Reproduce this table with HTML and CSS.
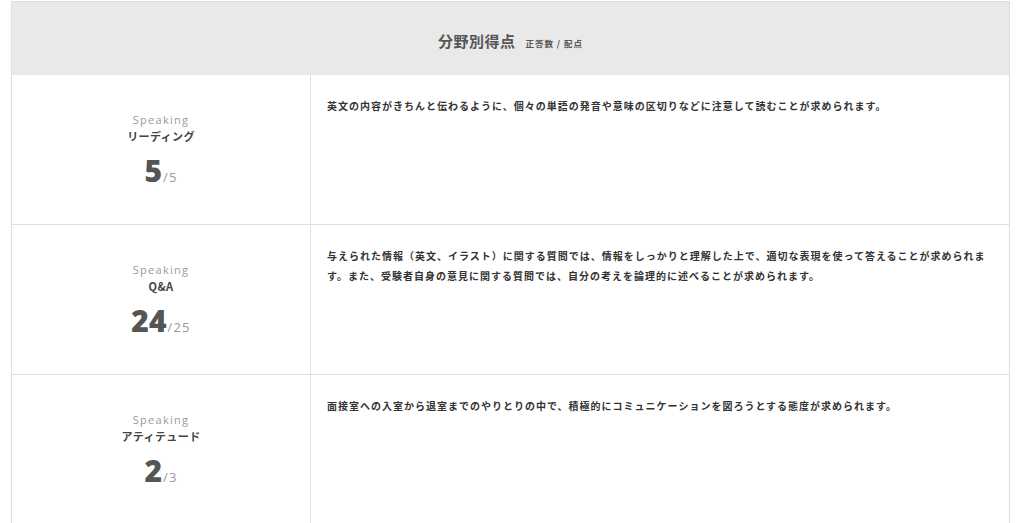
FILE: index.html
```html
<!DOCTYPE html>
<html lang="ja">
<head>
<meta charset="utf-8">
<title>分野別得点</title>
<link rel="stylesheet" href="styles.css">
</head>
<body>
<div class="score-table">
  <div class="head">
    <h2 class="title">分野別得点<span class="sub">正答数 / 配点</span></h2>
  </div>
  <div class="row">
    <div class="cat">
      <p class="en">Speaking</p>
      <p class="ja">リーディング</p>
      <p class="score"><b>5</b><span>/5</span></p>
    </div>
    <div class="desc"><p>英文の内容がきちんと伝わるように、個々の単語の発音や意味の区切りなどに注意して読むことが求められます。</p></div>
  </div>
  <div class="row">
    <div class="cat">
      <p class="en">Speaking</p>
      <p class="ja">Q&amp;A</p>
      <p class="score"><b>24</b><span>/25</span></p>
    </div>
    <div class="desc"><p>与えられた情報（英文、イラスト）に関する質問では、情報をしっかりと理解した上で、適切な表現を使って答えることが求められます。また、受験者自身の意見に関する質問では、自分の考えを論理的に述べることが求められます。</p></div>
  </div>
  <div class="row">
    <div class="cat">
      <p class="en">Speaking</p>
      <p class="ja">アティテュード</p>
      <p class="score"><b>2</b><span>/3</span></p>
    </div>
    <div class="desc"><p>面接室への入室から退室までのやりとりの中で、積極的にコミュニケーションを図ろうとする態度が求められます。</p></div>
  </div>
</div>
</body>
</html>
```

FILE: styles.css
```css
* { box-sizing: border-box; }
html, body { margin: 0; padding: 0; background: #fff; }
body {
  font-family: "Noto Sans CJK JP", "Noto Sans", sans-serif;
  color: #333;
}
p, h2 { margin: 0; }

.score-table {
  width: 999px;
  margin: 1px 0 0 11px;
  border: 1px solid #dedede;
  border-bottom: none;
}

.head {
  height: 73px;
  background: #e9e9e9;
  padding-top: 29px;
  text-align: center;
}
.title {
  font-size: 15px;
  line-height: 20px;
  font-weight: 700;
  color: #555;
  letter-spacing: 0.5px;
}
.sub {
  font-size: 8.5px;
  font-weight: 700;
  margin-left: 10px;
  letter-spacing: 1px;
  color: #555;
}

.row {
  display: grid;
  grid-template-columns: 299px 1fr;
  height: 150px;
  border-bottom: 1px solid #e0e0e0;
}

.cat {
  border-right: 1px solid #e0e0e0;
  padding-top: 37px;
  text-align: center;
}
.en {
  font-family: "Open Sans", "Noto Sans", sans-serif;
  font-size: 11px;
  line-height: 16px;
  letter-spacing: 1.3px;
  color: #9a9a9a;
}
.ja {
  font-size: 11px;
  line-height: 16px;
  font-weight: 700;
  letter-spacing: 0.4px;
  color: #444;
}
.score {
  margin-top: 9px;
  font-family: "Open Sans", "Noto Sans", sans-serif;
  line-height: 36px;
  color: #555;
}
.score b {
  font-size: 30px;
  font-weight: 800;
  letter-spacing: 0;
}
.score span {
  font-size: 13px;
  color: #999;
  letter-spacing: 1.2px;
  margin-left: 1px;
}

.desc {
  padding: 21px 16px 0 16px;
}
.desc p {
  font-size: 10px;
  line-height: 20px;
  font-weight: 700;
  letter-spacing: 1px;
  color: #333;
}
```
